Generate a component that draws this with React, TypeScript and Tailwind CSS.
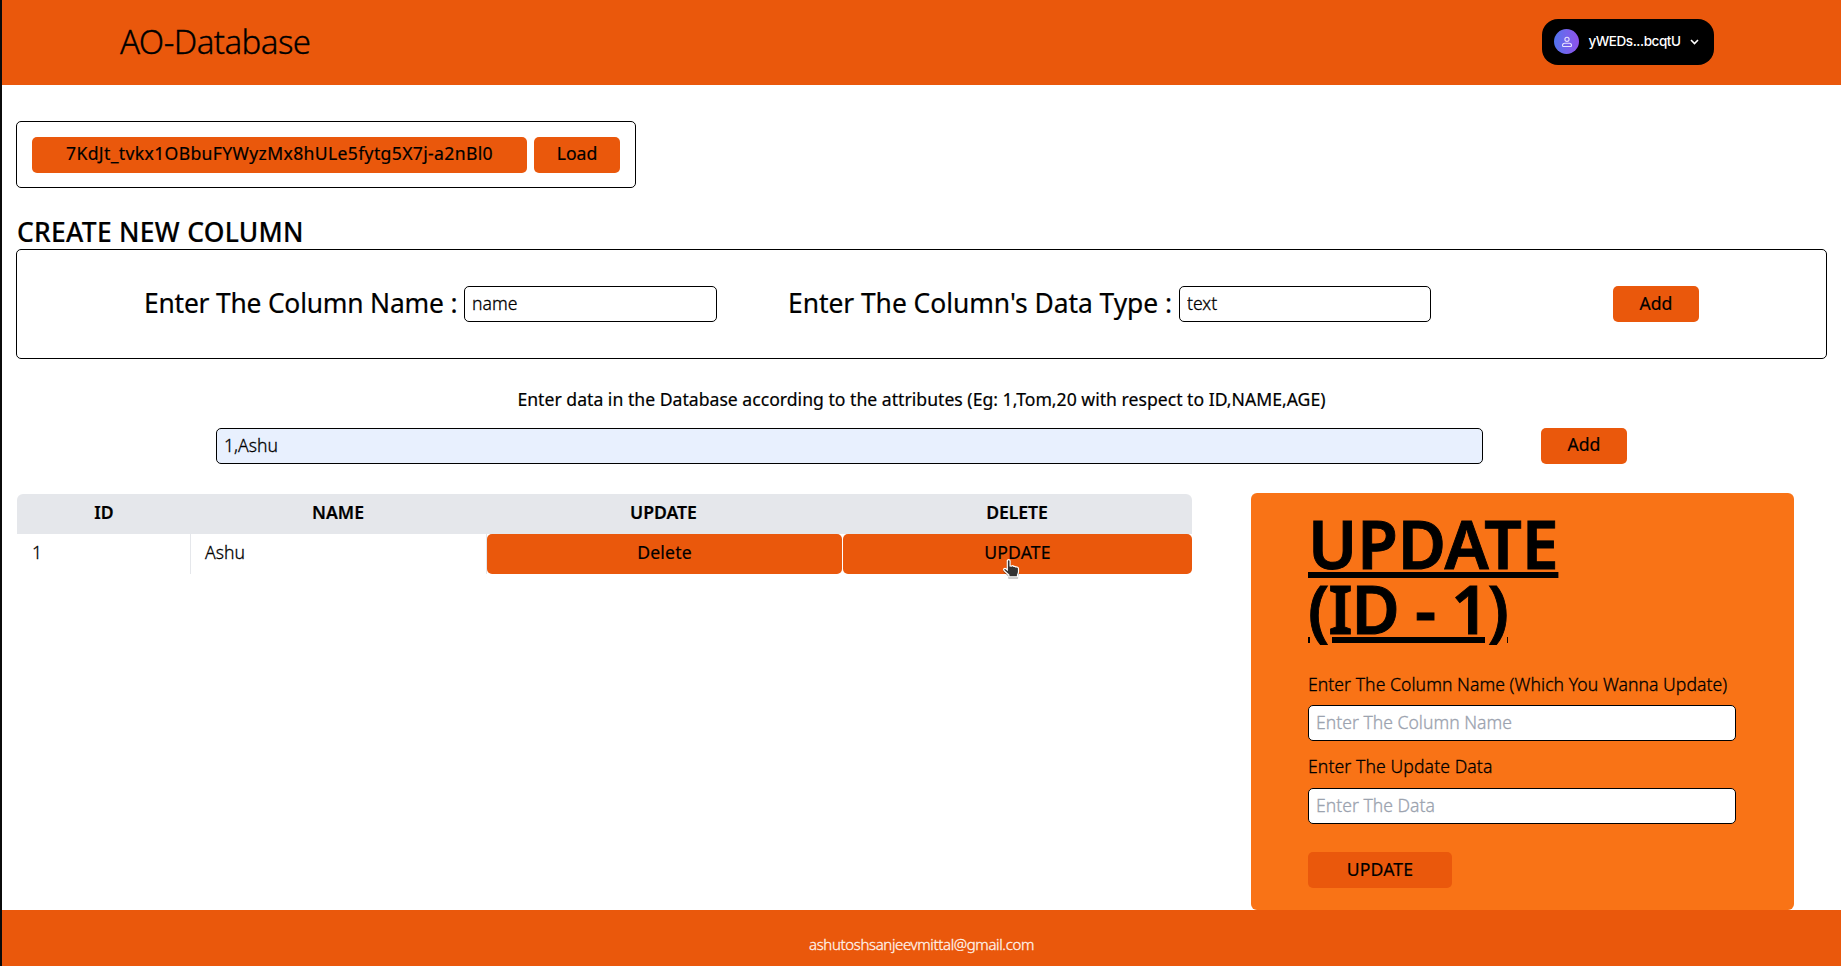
import type { ReactNode } from "react";

function Button({ children, className = "" }: { children: ReactNode; className?: string }) {
  return (
    <button
      className={`flex h-9 shrink-0 items-center justify-center rounded-[5px] bg-[#ea580c] font-normal whitespace-nowrap text-black ${className}`}
    >
      {children}
    </button>
  );
}

const lightText = "font-light [-webkit-text-stroke:0.3px_currentColor]";

const inputClass =
  "h-9 rounded-[5px] border border-black px-[7px] pb-0.5 font-light [-webkit-text-stroke:0.3px_currentColor] text-[17.6px] text-black placeholder:text-[#9ca3af] outline-none";

function WalletButton() {
  return (
    <button className="mb-0.5 flex h-[46px] w-[172px] items-center rounded-2xl bg-black pl-3 text-white">
      <span className="flex size-[25px] items-center justify-center rounded-full bg-linear-to-r from-[#4f73ee] to-[#8e50ea]">
        <svg width="11" height="12" viewBox="0 0 11 12" fill="none" stroke="#e6e2fd" strokeWidth="1.1" className="translate-x-[0.5px]">
          <circle cx="5.5" cy="3.3" r="2.1" />
          <path d="M3.200 7.300h4.600c1.300 0 2.200 1 2.200 2.100 0 .7-.4 1.100-1 1.100H2c-.6 0-1-.4-1-1.100 0-1.100.9-2.100 2.200-2.100Z" />
        </svg>
      </span>
      <span className="ml-[9px] w-[93px] font-['Inter',sans-serif] text-[13.5px] font-medium tracking-[-0.43px] whitespace-nowrap [-webkit-text-stroke:0px]">
        yWEDs...bcqtU
      </span>
      <svg width="9" height="6" viewBox="0 0 9 6" fill="none" stroke="white" strokeWidth="1.6" className="ml-[9px]">
        <path d="M1 1l3.500 3.500L8 1" />
      </svg>
    </button>
  );
}

function PointerCursor() {
  return (
    <svg
      width="17"
      height="20"
      viewBox="0 0 17 20"
      className="absolute top-[25px] left-[160px] drop-shadow-[0_1px_0.5px_rgba(0,0,0,0.4)]"
    >
      <path
        d="M4.300 1.900c0-1.700 2.800-1.700 2.800 0v5.100l1.500.1c.6-.4 1.700-.3 2.100.3.700-.2 1.700 0 2 .6 1.500-.2 2.800.4 2.800 1.700v3c0 1.300-.6 2.300-1 3.100v2H5.900v-1.700L1 11.500c-1-1.400.6-2.600 1.900-1.700l1.400 1.200Z"
        fill="#333"
        stroke="white"
        strokeWidth="1.200"
      />
    </svg>
  );
}

export default function App() {
  return (
    <div className="flex h-[966px] w-[1841px] flex-col overflow-hidden border-l-2 border-[#0b0b0b] bg-white font-['Noto_Sans',sans-serif] text-[17.6px] text-black [-webkit-text-stroke:0.2px_currentColor]">
      <header className="flex h-[85px] shrink-0 items-center justify-between bg-[#ea580c] pr-[127px] pl-[118px]">
        <h1 className={`pb-0.5 text-[33px] tracking-[-0.55px] ${lightText}`}>AO-Database</h1>
        <WalletButton />
      </header>

      <main className="flex grow flex-col px-[14px] pt-9">
        <section className="flex h-[67px] w-[620px] items-center gap-[7px] rounded-[5px] border border-black pl-[15px]">
          <Button className="w-[495px] pb-0.5 tracking-[0.34px]">7KdJt_tvkx1OBbuFYWyzMx8hULe5fytg5X7j-a2nBl0</Button>
          <Button className="w-[86px] pb-0.5">Load</Button>
        </section>

        <h2 className="mt-[25px] flex h-9 items-center pt-1 pl-px text-[26.4px] font-medium tracking-[0.3px]">CREATE NEW COLUMN</h2>
        <section className="flex h-[110px] items-center rounded-[5px] border border-black pl-[127px]">
          <label className="w-[320px] pb-px text-[26.4px] tracking-[-0.2px] whitespace-nowrap">Enter The Column Name :</label>
          <input className={`w-[253px] ${inputClass}`} defaultValue="name" />
          <label className="ml-[71px] w-[391px] pb-px text-[26.4px] tracking-[-0.03px] whitespace-nowrap">
            Enter The Column&apos;s Data Type :
          </label>
          <input className={`w-[252px] ${inputClass}`} defaultValue="text" />
          <Button className="ml-[182px] w-[86px] pb-0.5">Add</Button>
        </section>

        <p className="mt-[27px] flex h-[26px] items-center justify-center tracking-[0.015px]">
          Enter data in the Database according to the attributes (Eg: 1,Tom,20 with respect to ID,NAME,AGE)
        </p>
        <div className="mt-4 flex items-center pl-[200px]">
          <input className={`w-[1267px] bg-[#e8f0fe] ${inputClass}`} defaultValue="1,Ashu" />
          <Button className="ml-[58px] w-[86px] pb-1">Add</Button>
        </div>

        <div className="mt-[29px] flex items-start pl-px">
          <div className="mt-px w-[1175px]">
            <div className="grid h-10 grid-cols-[174px_296px_356px_349px] items-center rounded-t-md bg-[#e5e7eb] pb-[3px] text-center font-semibold">
              <span>ID</span>
              <span className="pr-0.5">NAME</span>
              <span className="pr-[3px]">UPDATE</span>
              <span className="pr-px tracking-[-0.1px]">DELETE</span>
            </div>
            <div className="grid h-10 grid-cols-[174px_296px_356px_349px]">
              <span className={`flex items-center border-r border-[#e5e7eb] pb-1 pl-[15px] ${lightText}`}>1</span>
              <span className={`flex items-center border-r border-[#e5e7eb] pb-1 pl-[14px] ${lightText}`}>Ashu</span>
              <span className="mr-px flex items-center justify-center rounded-[5px] bg-[#ea580c] pb-1 tracking-[0.15px]">Delete</span>
              <span className="relative flex items-center justify-center rounded-[5px] bg-[#ea580c] pb-1 tracking-[0.15px]">
                UPDATE
                <PointerCursor />
              </span>
            </div>
          </div>

          <aside className="ml-[59px] flex h-[417px] w-[543px] flex-col rounded-md bg-[#f97316] pt-[18px] pl-[57px]">
            <h3 className="text-[66px] leading-[65px] font-semibold tracking-[-0.1px] underline decoration-[6px] underline-offset-[3px] [-webkit-text-stroke:0.9px_black]">
              UPDATE
              <br />
              <span className="tracking-[-1.1px]">(ID - 1)</span>
            </h3>
            <label className={`mt-[30px] flex h-[26px] items-center tracking-[0.05px] ${lightText}`}>
              Enter The Column Name (Which You Wanna Update)
            </label>
            <input className={`mt-2 w-[428px] bg-white ${inputClass}`} placeholder="Enter The Column Name" />
            <label className={`mt-[12px] flex h-[26px] items-center tracking-[0.1px] ${lightText}`}>Enter The Update Data</label>
            <input className={`mt-[9px] w-[428px] bg-white ${inputClass}`} placeholder="Enter The Data" />
            <Button className="mt-7 w-[144px] pb-0.5 tracking-[0.15px]">UPDATE</Button>
          </aside>
        </div>
      </main>

      <footer className={`flex h-14 shrink-0 items-center justify-center bg-[#ea580c] pt-[12px] text-[15px] tracking-[-0.36px] text-[#fff3ec] ${lightText}`}>
        ashutoshsanjeevmittal@gmail.com
      </footer>
    </div>
  );
}
